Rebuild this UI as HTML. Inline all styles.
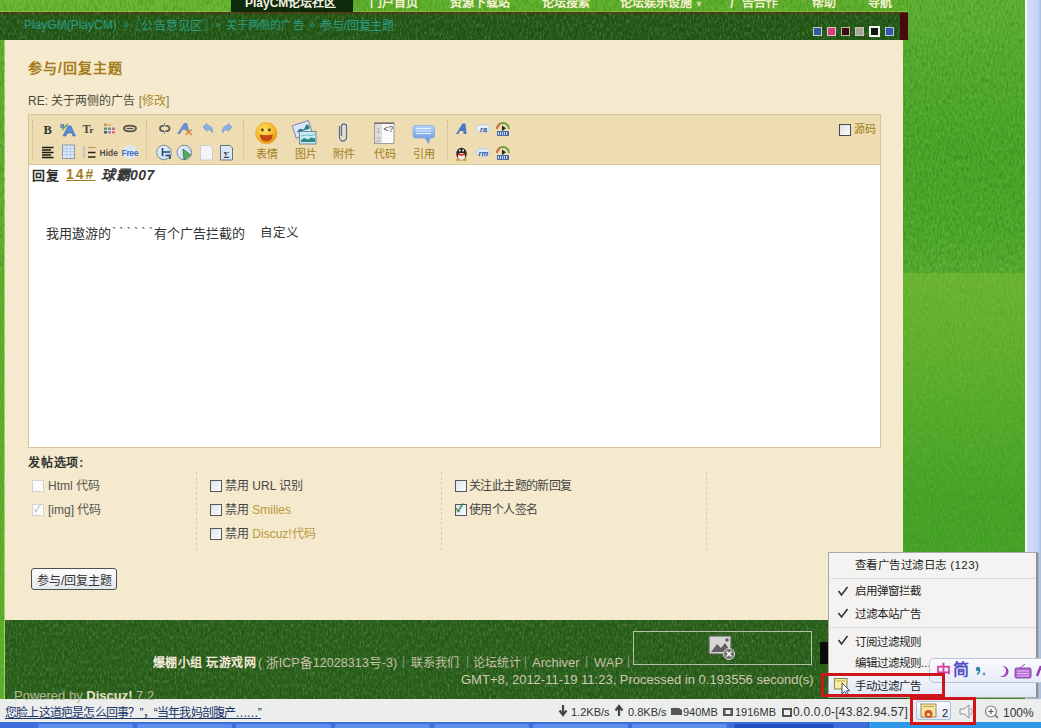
<!DOCTYPE html>
<html lang="zh-CN"><head><meta charset="utf-8">
<style>
*{margin:0;padding:0;box-sizing:border-box}
html,body{width:1041px;height:728px;overflow:hidden;position:relative;background:#4ea424;font-family:"Liberation Sans",sans-serif;font-size:12px;color:#333}
.a{position:absolute}
.cb{width:12px;height:12px;border:1px solid #505860;background:linear-gradient(135deg,#dfe4ea,#fbfcfd)}
.t{position:absolute;white-space:nowrap;line-height:1}
</style></head><body>
<!-- grass background -->
<div class="a" style="left:0;top:0;width:1025px;height:273px;background:linear-gradient(#5cae2e 0px,#52aa2a 60px,#46a424 150px,#4aa626 230px,#52aa2c 273px)"></div>
<div class="a" style="left:0;top:273px;width:1025px;height:427px;background:linear-gradient(#6ab430 0px,#62b02c 70px,#52aa28 150px,#44a224 230px,#42a024 427px)"></div>
<div class="a" style="left:0;top:0;width:231px;height:12px;background:#66b42c;border-bottom:1px solid #8cc050"></div>
<div class="a" style="left:353px;top:0;width:555px;height:12px;background:#5cae28;border-bottom:1px solid #80b848"></div>
<div class="a" style="left:0;top:40px;width:5px;height:660px;background:#5aae2a;border-right:1px solid #a8d070"></div>
<div class="a" style="left:0;top:12px;width:908px;height:28px;background:#245616;border-top:2px solid #4a3a12"></div>
<div class="a" style="left:5px;top:620px;width:903px;height:79px;background:#2a5e1b"></div>
<svg id="noise" class="a" style="left:0;top:0" width="1041" height="728" viewBox="0 0 1041 728">
<defs>
<filter id="gn" x="0" y="0" width="100%" height="100%">
<feTurbulence type="fractalNoise" baseFrequency="0.6 0.25" numOctaves="3" seed="7" result="n"/>
<feColorMatrix type="matrix" values="0 0 0 0 0.85  0 0 0 0 1  0 0 0 0 0.6  0 0 0 -2.2 1.25"/>
</filter>
<filter id="gd" x="0" y="0" width="100%" height="100%">
<feTurbulence type="fractalNoise" baseFrequency="0.45 0.18" numOctaves="3" seed="3"/>
<feColorMatrix type="matrix" values="0 0 0 0 0  0 0 0 0 0.05  0 0 0 0 0  0 0 0 -2.4 1.35"/>
</filter>
</defs>
<rect x="0" y="0" width="1025" height="273" filter="url(#gn)" opacity="0.16"/>
<rect x="0" y="0" width="1025" height="273" filter="url(#gd)" opacity="0.2"/>
<rect x="0" y="273" width="1025" height="427" filter="url(#gn)" opacity="0.1"/>
<rect x="0" y="273" width="1025" height="427" filter="url(#gd)" opacity="0.08"/>
<rect x="0" y="14" width="900" height="26" filter="url(#gn)" opacity="0.05"/>
<rect x="0" y="14" width="900" height="26" filter="url(#gd)" opacity="0.2"/>
<rect x="5" y="620" width="903" height="79" filter="url(#gn)" opacity="0.1"/>
<rect x="5" y="620" width="903" height="79" filter="url(#gd)" opacity="0.22"/>
</svg>
<!-- scrollbar -->
<div class="a" style="left:1025px;top:0;width:16px;height:700px;background:linear-gradient(90deg,#d4dafa 0,#d0d8f8 6px,#c4d6fa 8px,#c4d6fa 11px,#a8bcd8 14px);border-left:2px solid #f2fff0"></div>

<!-- nav -->
<div class="a" style="left:231px;top:0;width:122px;height:12px;background:#0e2a0c"></div>
<div class="t" style="left:245px;top:-3px;font-size:12px;font-weight:bold;color:#f4f0e0">PlayCM论坛社区</div>
<div class="t" style="left:370px;top:-3px;font-size:12px;font-weight:bold;color:#f4f0d0">门户首页</div>
<div class="t" style="left:450px;top:-3px;font-size:12px;font-weight:bold;color:#f4f0d0">资源下载站</div>
<div class="t" style="left:542px;top:-3px;font-size:12px;font-weight:bold;color:#f4f0d0">论坛搜索</div>
<div class="t" style="left:620px;top:-3px;font-size:12px;font-weight:bold;color:#f4f0d0">论坛娱乐设施<span style="font-size:9px;color:#c8d8a0"> ▼</span></div>
<div class="t" style="left:730px;top:-3px;font-size:12px;font-weight:bold;color:#f4f0d0">广告合作</div>
<div class="t" style="left:812px;top:-3px;font-size:12px;font-weight:bold;color:#f4f0d0">帮助</div>
<div class="t" style="left:868px;top:-3px;font-size:12px;font-weight:bold;color:#f4f0d0">导航</div>


<!-- breadcrumb bar -->
<div class="a" style="left:900px;top:13px;width:8px;height:27px;background:#4a0a0c"></div>


<div class="t" style="left:24px;top:19px;font-size:12px;color:#2a9c88">PlayGM(PlayCM)</div>
<div class="t" style="left:123px;top:19px;font-size:11px;color:#2a9c88">»</div>
<div class="t" style="left:129px;top:20px;font-size:12px;color:#2a9c88;letter-spacing:0.3px">〖公告意见区〗</div>
<div class="t" style="left:215px;top:19px;font-size:11px;color:#2a9c88">»</div>
<div class="t" style="left:226px;top:20px;font-size:11px;color:#2a9c88;letter-spacing:0.1px">关于两侧的广告</div>
<div class="t" style="left:309px;top:19px;font-size:11px;color:#2a9c88">»</div>
<div class="t" style="left:320px;top:20px;font-size:12px;color:#2a9c88;letter-spacing:-0.2px">参与/回复主题</div>
<div class="a" style="left:813px;top:27px;width:9px;height:9px;background:#2c5c9c;border:1px solid #c8d0c0"></div>
<div class="a" style="left:827px;top:27px;width:9px;height:9px;background:#d23c80;border:1px solid #d8c8c0"></div>
<div class="a" style="left:841px;top:27px;width:9px;height:9px;background:#3c0a14;border:1px solid #c0b8a8"></div>
<div class="a" style="left:855px;top:27px;width:9px;height:9px;background:#a8a898;border:1px solid #c8c8b8"></div>
<div class="a" style="left:869px;top:26px;width:11px;height:11px;background:#0c1c0c;border:2px solid #f0f8f0"></div>
<div class="a" style="left:885px;top:27px;width:9px;height:9px;background:#3456a8;border:1px solid #b8c8d8"></div>
<!-- cream -->
<div class="a" style="left:5px;top:40px;width:898px;height:580px;background:#f5eacd"></div>

<!-- content -->
<div class="t" style="left:28px;top:61px;font-size:14px;font-weight:bold;color:#a47c1c;letter-spacing:1px">参与/回复主题</div>
<div class="t" style="left:28px;top:95px;font-size:12px;color:#4a4a40">RE: 关于两侧的广告 <span style="color:#8a7a5a">[</span><span style="color:#b08c30">修改</span><span style="color:#8a7a5a">]</span></div>

<!-- editor frame -->
<div class="a" style="left:28px;top:114px;width:853px;height:334px;border:1px solid #d6c49c;background:#fff"></div>
<div class="a" style="left:29px;top:115px;width:851px;height:50px;background:#eedcb2;border-bottom:1px solid #dcc89c"></div>
<!-- toolbar separators -->
<div class="a" style="left:32px;top:120px;width:0;height:40px;border-left:1px dotted #c8b48a"></div>
<div class="a" style="left:146px;top:120px;width:0;height:40px;border-left:1px dotted #c8b48a"></div>
<div class="a" style="left:243px;top:120px;width:0;height:40px;border-left:1px dotted #c8b48a"></div>
<div class="a" style="left:447px;top:120px;width:0;height:40px;border-left:1px dotted #c8b48a"></div>
<svg class="a" style="left:0;top:0" width="1041" height="728" viewBox="0 0 1041 728">
<defs>
<radialGradient id="sm" cx="0.4" cy="0.35" r="0.7"><stop offset="0" stop-color="#ffe060"/><stop offset="0.7" stop-color="#f6b522"/><stop offset="1" stop-color="#e48a10"/></radialGradient>
<linearGradient id="bl" x1="0" y1="0" x2="0" y2="1"><stop offset="0" stop-color="#b8d4fa"/><stop offset="1" stop-color="#5a8ae0"/></linearGradient>
<linearGradient id="lb" x1="0" y1="0" x2="1" y2="1"><stop offset="0" stop-color="#eef4fc"/><stop offset="1" stop-color="#b8d0ec"/></linearGradient>
</defs>
<!-- group1 row1 -->
<text x="43.5" y="133.5" font-family="Liberation Serif" font-weight="bold" font-size="12.5" fill="#353530">B</text>
<text x="60" y="128" font-family="Liberation Sans" font-weight="bold" font-size="8" fill="#3a70b0">a</text>
<path d="M63 136 L68 126 L71 126 L75.5 136 L73 136 L72 133 L67 133 L66 136Z" fill="#5a8ad0" stroke="#3a68b0" stroke-width="0.6"/>
<path d="M62 130 L68 124" stroke="#4aa060" stroke-width="1.2"/>
<text x="82.5" y="133" font-family="Liberation Serif" font-weight="bold" font-size="12" fill="#504a40">T</text>
<text x="89.5" y="133" font-family="Liberation Serif" font-weight="bold" font-size="9" fill="#3a3630">r</text>
<rect x="104" y="123.5" width="3" height="2.5" fill="#d89050"/><rect x="108" y="124" width="3" height="2" fill="#e0b060"/>
<rect x="104" y="127.5" width="3" height="2.5" fill="#50a070"/><rect x="108" y="127.5" width="3" height="2.5" fill="#7090c0"/><rect x="112" y="127.5" width="3" height="2.5" fill="#c070a0"/>
<rect x="104" y="131" width="3" height="2.5" fill="#406080"/><rect x="108" y="131" width="3" height="2.5" fill="#a080c0"/><rect x="112" y="131" width="3" height="2.5" fill="#e07080"/>
<ellipse cx="130" cy="128.5" rx="6" ry="2.8" fill="none" stroke="#55524c" stroke-width="1.8"/>
<path d="M126.5 128.5 H133.5" stroke="#55524c" stroke-width="1.2"/>
<!-- group1 row2 -->
<path d="M42 147.5 H53.5 M42 150 H51 M42 152.5 H53.5 M42 155 H51 M42 157.5 H53.5" stroke="#1e1a14" stroke-width="1.3"/>
<rect x="62.5" y="145" width="12" height="13.5" fill="#d8e8f8" stroke="#909aa4" stroke-width="1"/>
<path d="M63 148.5 H74 M63 151.5 H74 M63 154.5 H74 M66.5 145.5 V158 M70.5 145.5 V158" stroke="#a8c4e4" stroke-width="0.7"/>
<path d="M84 146 V158" stroke="#c8c8c0" stroke-width="2.5"/>
<path d="M88 147.5 H95.5" stroke="#c0a050" stroke-width="1.3"/><path d="M88 152.5 H95.5 M88 157 H95.5" stroke="#2a2418" stroke-width="1.3"/>
<text x="99.5" y="156" font-family="Liberation Sans" font-weight="bold" font-size="8.5" fill="#55504a" textLength="18.5">Hide</text>
<circle cx="130" cy="152" r="7" fill="#dde8f6"/>
<text x="121.5" y="156" font-family="Liberation Sans" font-weight="bold" font-size="8.5" fill="#4a70b8" textLength="17">Free</text>
<!-- group2 row1 -->
<path d="M160 128.5 a3 2.5 0 0 1 4 -2.5 M160 128.5 a3 2.5 0 0 0 4 2.5 M169.5 128.5 a3 2.5 0 0 0 -4 -2.5 M169.5 128.5 a3 2.5 0 0 1 -4 2.5" fill="none" stroke="#5a5a58" stroke-width="1.8"/>
<path d="M164.5 123 V126 M164.5 131 V134" stroke="#8090a8" stroke-width="1"/>
<path d="M177 134 L184 123 L187 123 L190 133 L187.5 133 L186.5 130 L182.5 130 L180 134Z" fill="#6a90d0"/>
<path d="M185.5 129.5 L192 135 M192 129.5 L185.5 135" stroke="#d88a40" stroke-width="1.6"/>
<path d="M203 127 L207 123.5 V125.5 C211 125.5 213 128 212.5 133 C211 130 209.5 129.5 207 129.5 V131.5 Z" fill="#8cb0e8" stroke="#6a90d0" stroke-width="0.6"/>
<path d="M232 127 L228 123.5 V125.5 C224 125.5 222 128 222.5 133 C224 130 225.5 129.5 228 129.5 V131.5 Z" fill="#8cb0e8" stroke="#6a90d0" stroke-width="0.6"/>
<!-- group2 row2 -->
<circle cx="164" cy="152.5" r="7.3" fill="url(#lb)" stroke="#7a8a98" stroke-width="1"/>
<path d="M162.5 148 V156 M162.5 152 H170 M165.5 155.5 H170 V159" stroke="#2a4a70" stroke-width="1.6" fill="none"/>
<circle cx="184.3" cy="152.5" r="7.3" fill="url(#lb)" stroke="#7a8a98" stroke-width="1"/>
<path d="M183 149 L190.5 155 L184 159.5Z" fill="#58b050" stroke="#2a7030" stroke-width="0.8"/>
<path d="M200.5 145.5 H210 L212.5 148 V160 H200.5Z" fill="#f4f4f8" stroke="#c8c8cc" stroke-width="0.9"/>
<path d="M220.5 145.5 H230 L232.5 148 V160 H220.5Z" fill="#dce8f6" stroke="#6a7480" stroke-width="1"/>
<text x="223.5" y="157.5" font-family="Liberation Serif" font-weight="bold" font-size="9" fill="#304060">Σ</text>
<!-- group3 -->
<circle cx="266.3" cy="133.2" r="10.6" fill="url(#sm)" stroke="#e0a030" stroke-width="0.6"/>
<circle cx="262.4" cy="130" r="1.4" fill="#5a4010"/><circle cx="269.4" cy="130" r="1.4" fill="#5a4010"/>
<path d="M259.5 134.5 Q266.3 136 273 134.5 Q272 141.5 266.3 141.5 Q260.5 141.5 259.5 134.5Z" fill="#c24a14"/>
<g transform="rotate(-18 302 130)"><rect x="294" y="123" width="17" height="13" fill="#dde6f8" stroke="#7888a0" stroke-width="0.9"/><path d="M296 131 l4 -3 l4 2 l4 -4 l2 2 v3 h-14z" fill="#2a7a8a"/></g>
<rect x="299.5" y="131.5" width="16.5" height="12.5" fill="#c8ecf4" stroke="#6a7a90" stroke-width="0.9"/>
<path d="M301 140 l3 -2 l4 1.5 l3 -2 l4 1 v3.5 h-14z" fill="#2a8a88"/><path d="M301 136 l5 -1 l5 0.5 l4 -1" stroke="#5aaab8" stroke-width="0.8" fill="none"/>
<path d="M341.5 136 V126.5 a2.5 2.5 0 0 1 5 0 V137.5 a3.5 3.5 0 0 1 -7 0 V126" fill="none" stroke="#e8ecf0" stroke-width="3"/>
<path d="M341.5 136 V126.5 a2.5 2.5 0 0 1 5 0 V137.5 a3.5 3.5 0 0 1 -7 0 V126" fill="none" stroke="#6a6e72" stroke-width="1.4"/>
<rect x="374.5" y="123" width="19.5" height="20.5" fill="#fbfbfb" stroke="#8a8a84" stroke-width="0.8"/>
<rect x="375" y="123.5" width="7" height="19.5" fill="#dcdcd8"/>
<path d="M374.5 123.2 H394" stroke="#4a4a48" stroke-width="1"/>
<text x="376" y="133" font-family="Liberation Sans" font-size="8" fill="#a8a8a0">1</text>
<text x="376" y="142" font-family="Liberation Sans" font-size="8" fill="#a8a8a0">2</text>
<text x="383.5" y="132" font-family="Liberation Sans" font-size="8.5" fill="#404040">&lt;?</text>
<path d="M415 125.5 H432 Q434.5 125.5 434.5 128 V135.5 Q434.5 138 432 138 H430 L428.5 143.5 L425 138 H415.5 Q413 138 413 135.5 V128 Q413 125.5 415.5 125.5Z" fill="url(#bl)" stroke="#7aa0e0" stroke-width="0.6"/>
<path d="M416 128.5 H431 M416 131 H431 M416 133.5 H431" stroke="#f0f6ff" stroke-width="0.9"/>
<!-- group4 -->
<path d="M456 134 L462.5 123.5 L465.5 123.5 L466.5 134 L463.5 134 L463.3 131 L459.8 131 L458.5 134Z" fill="#4a78c8"/>
<ellipse cx="483" cy="128.5" rx="7" ry="4" fill="#e8f0f8" stroke="#b8c8dc" stroke-width="0.8"/>
<text x="480" y="131.5" font-family="Liberation Sans" font-weight="bold" font-style="italic" font-size="7.5" fill="#2a5090">ra</text>
<path d="M497 129 A6 6 0 0 1 509 129" fill="none" stroke="#6aa040" stroke-width="2"/>
<path d="M497 129 A6 6 0 0 1 500 124" fill="none" stroke="#d0703a" stroke-width="2"/>
<path d="M502 125.5 L506 128.3 L502 131Z" fill="#222"/>
<rect x="497" y="131" width="12" height="5" fill="#4a6aa8"/>
<path d="M498.5 132 V135 M500.5 132 V135 M502.5 132 V135 M504.5 132 V135 M506.5 132 V135" stroke="#e8f0ff" stroke-width="0.8"/>
<ellipse cx="461.5" cy="154" rx="5.2" ry="6.3" fill="#2e2420"/>
<ellipse cx="461.5" cy="156.5" rx="3.6" ry="3.4" fill="#f4ece4"/>
<circle cx="459.8" cy="150.5" r="0.9" fill="#fff"/><circle cx="463.2" cy="150.5" r="0.9" fill="#fff"/>
<path d="M457.5 153.2 Q461.5 155 465.5 153.2 L465 154.8 Q461.5 156.5 458 154.8Z" fill="#d82818"/>
<ellipse cx="458" cy="160" rx="2.2" ry="1" fill="#e0a020"/><ellipse cx="465" cy="160" rx="2.2" ry="1" fill="#e0a020"/>
<ellipse cx="483" cy="152.5" rx="7" ry="4.2" fill="#dce8f8" stroke="#b8c8dc" stroke-width="0.8"/>
<text x="478.5" y="155.5" font-family="Liberation Sans" font-weight="bold" font-style="italic" font-size="7.5" fill="#2a5090">rm</text>
<path d="M497 153 A6 6 0 0 1 509 153" fill="none" stroke="#6aa040" stroke-width="2"/>
<path d="M497 153 A6 6 0 0 1 500 148" fill="none" stroke="#d0703a" stroke-width="2"/>
<path d="M502 149.5 L506 152.3 L502 155Z" fill="#222"/>
<rect x="497" y="155" width="12" height="5" fill="#4a6aa8"/>
<path d="M498.5 156 V159 M500.5 156 V159 M502.5 156 V159 M504.5 156 V159 M506.5 156 V159" stroke="#e8f0ff" stroke-width="0.8"/>
</svg>

<div class="t" style="left:256px;top:149px;font-size:11px;color:#a07c20">表情</div>
<div class="t" style="left:295px;top:149px;font-size:11px;color:#a07c20">图片</div>
<div class="t" style="left:333px;top:149px;font-size:11px;color:#a07c20">附件</div>
<div class="t" style="left:374px;top:149px;font-size:11px;color:#a07c20">代码</div>
<div class="t" style="left:413px;top:149px;font-size:11px;color:#a07c20">引用</div>
<div class="a" style="left:839px;top:124px;width:12px;height:12px;border:1px solid #4a4a4a;background:linear-gradient(135deg,#dde3ea,#fafbfc)"></div>
<div class="t" style="left:854px;top:124px;font-size:11px;color:#a07c20">源码</div>

<!-- editor text -->
<div class="t" style="left:32px;top:169px;font-size:13px;font-weight:bold;color:#303030;letter-spacing:1px">回复</div>
<div class="t" style="left:66px;top:167px;font-size:14px;font-weight:bold;color:#a07c22;text-decoration:underline;letter-spacing:2px">14#</div>
<div class="t" style="left:101px;top:168px;font-size:14px;font-weight:bold;font-style:italic;color:#383838;letter-spacing:0.5px">球霸007</div>
<div class="t" style="left:46px;top:227px;font-size:13px;color:#333">我用遨游的</div><div class="t" style="left:112px;top:226px;font-size:13px;color:#444;letter-spacing:3px">``````</div><div class="t" style="left:154px;top:227px;font-size:13px;color:#333">有个广告拦截的</div><div class="t" style="left:260px;top:227px;font-size:12.5px;color:#333">自定义</div>

<!-- options -->
<div class="t" style="left:28px;top:457px;font-size:12px;font-weight:bold;color:#333;letter-spacing:0.8px">发帖选项:</div>
<div class="a" style="left:196px;top:472px;width:0;height:78px;border-left:1px dashed #dccdb0"></div>
<div class="a" style="left:441px;top:472px;width:0;height:78px;border-left:1px dashed #dccdb0"></div>
<div class="a" style="left:706px;top:472px;width:0;height:78px;border-left:1px dashed #dccdb0"></div>

<div class="a" style="left:32px;top:480px;width:12px;height:12px;border:1px solid #d8d4cc;background:#fbfbf9"></div>
<div class="t" style="left:48px;top:480px;font-size:12px;color:#555">Html 代码</div>
<div class="a" style="left:32px;top:504px;width:12px;height:12px;border:1px solid #d8d4cc;background:#fbfbf9"></div>
<div class="t" style="left:34px;top:504px;font-size:10px;color:#a8b0b0">✓</div>
<div class="t" style="left:48px;top:504px;font-size:12px;color:#555">[img] 代码</div>

<div class="a cb" style="left:210px;top:480px"></div>
<div class="t" style="left:225px;top:480px;font-size:12px;color:#444">禁用 URL 识别</div>
<div class="a cb" style="left:210px;top:504px"></div>
<div class="t" style="left:225px;top:504px;font-size:12px;color:#444">禁用 <span style="color:#b8983c">Smilies</span></div>
<div class="a cb" style="left:210px;top:528px"></div>
<div class="t" style="left:225px;top:528px;font-size:12px;color:#444">禁用 <span style="color:#b8983c">Discuz!代码</span></div>

<div class="a cb" style="left:455px;top:480px"></div>
<div class="t" style="left:469px;top:480px;font-size:12px;color:#444;letter-spacing:-0.6px">关注此主题的新回复</div>
<div class="a cb" style="left:455px;top:504px"></div>
<div class="t" style="left:456px;top:503px;font-size:11px;font-weight:bold;color:#2a8a4a">✓</div>
<div class="t" style="left:469px;top:504px;font-size:12px;color:#444;letter-spacing:-0.6px">使用个人签名</div>

<div class="a" style="left:31px;top:568px;width:86px;height:22px;border:1px solid #505050;border-radius:3px;background:linear-gradient(#fdfdfd,#e4e8ee)"></div>
<div class="t" style="left:37px;top:575px;font-size:12px;color:#333">参与/回复主题</div>
<!-- footer -->

<!-- status bar -->
<div class="a" style="left:0;top:699px;width:1041px;height:23px;background:#eceeee"></div>
<div class="a" style="left:0;top:722px;width:1041px;height:6px;background:#3c6fd9"></div>


<!-- footer content -->
<div class="t" style="left:153px;top:657px;font-size:12px;font-weight:bold;color:#f4e8d8;letter-spacing:0.4px">爆棚小组 玩游戏网</div>
<div class="t" style="left:258px;top:657px;font-size:12.6px;color:#c8c0a8">( 浙ICP备12028313号-3)</div>
<div class="t" style="left:402px;top:655px;font-size:12px;color:#8a9a7a">|</div>
<div class="t" style="left:411px;top:657px;font-size:12px;color:#c8c0a8">联系我们</div>
<div class="t" style="left:466px;top:655px;font-size:12px;color:#8a9a7a">|</div>
<div class="t" style="left:473px;top:657px;font-size:12px;color:#c8c0a8">论坛统计</div>
<div class="t" style="left:524px;top:655px;font-size:12px;color:#8a9a7a">|</div>
<div class="t" style="left:532px;top:656px;font-size:13px;color:#c8c0a8">Archiver</div>
<div class="t" style="left:585px;top:655px;font-size:12px;color:#8a9a7a">|</div>
<div class="t" style="left:594px;top:656px;font-size:13px;color:#c8c0a8">WAP</div>
<div class="t" style="left:627px;top:655px;font-size:12px;color:#8a9a7a">|</div>
<div class="t" style="left:461px;top:673px;font-size:13px;color:#d0c8b0">GMT+8, 2012-11-19 11:23, Processed in 0.193556 second(s)</div>
<div class="a" style="left:633px;top:631px;width:179px;height:34px;border:1px solid #b8c0a8"></div>
<div class="a" style="left:820px;top:642px;width:10px;height:22px;background:#0a0a0a"></div>
<svg class="a" style="left:708px;top:634px" width="30" height="28" viewBox="0 0 30 28">
<rect x="1" y="2" width="22" height="18" fill="#d8d8d8" stroke="#606060" stroke-width="1.2"/>
<path d="M3 18 L9 10 L13 14 L17 9 L21 15 V18Z" fill="#606060"/>
<circle cx="19" cy="6" r="1.8" fill="#606060"/>
<circle cx="21" cy="20" r="5.5" fill="#707070" stroke="#e0e0e0" stroke-width="1"/>
<path d="M18.5 17.5 L23.5 22.5 M23.5 17.5 L18.5 22.5" stroke="#fff" stroke-width="1.5"/>
</svg>
<div class="t" style="left:14px;top:689px;font-size:13px;color:#b8b898">Powered by <b style="color:#e8e0c8">Discuz!</b> 7.2</div>

<div class="t" style="left:5px;top:707px;font-size:12px;color:#1a3466;text-decoration:underline;letter-spacing:-0.8px">您脸上这道疤是怎么回事？”，“当年我妈剖腹产……”</div>
<div class="a" style="left:38px;top:724px;width:95px;height:4px;background:#5c90ec;border-radius:2px 2px 0 0"></div>
<div class="a" style="left:137px;top:724px;width:95px;height:4px;background:#5c90ec;border-radius:2px 2px 0 0"></div>
<div class="a" style="left:236px;top:724px;width:95px;height:4px;background:#5c90ec;border-radius:2px 2px 0 0"></div>
<div class="a" style="left:335px;top:724px;width:95px;height:4px;background:#5c90ec;border-radius:2px 2px 0 0"></div>
<div class="a" style="left:434px;top:724px;width:95px;height:4px;background:#5c90ec;border-radius:2px 2px 0 0"></div>
<div class="a" style="left:533px;top:724px;width:95px;height:4px;background:#5c90ec;border-radius:2px 2px 0 0"></div>
<div class="a" style="left:632px;top:724px;width:95px;height:4px;background:#5c90ec;border-radius:2px 2px 0 0"></div>
<div class="a" style="left:734px;top:724px;width:100px;height:4px;background:#2450c0;border-radius:2px 2px 0 0"></div>
<div class="a" style="left:868px;top:722px;width:173px;height:6px;background:#2c9ae8;border-left:1px solid #1a60b0"></div>
<svg class="a" style="left:555px;top:703px" width="250" height="18" viewBox="0 0 250 18">
<path d="M8 2 V10 M4.5 7.5 L8 12 L11.5 7.5" stroke="#444" stroke-width="2.2" fill="none"/>
<path d="M64 13 V5 M60.5 7.5 L64 3 L67.5 7.5" stroke="#444" stroke-width="2.2" fill="none"/>
<path d="M116 12 H127 V7 L124 5 H116Z" fill="#555"/>
<rect x="168" y="5" width="10" height="8" fill="#555"/><rect x="170.5" y="7" width="5" height="4" fill="#eee"/>
<rect x="227" y="5" width="10" height="9" fill="#555"/><rect x="229" y="7" width="6" height="5" fill="#eee"/>
</svg>
<div class="t" style="left:571px;top:707px;font-size:11px;color:#333">1.2KB/s</div>
<div class="t" style="left:628px;top:707px;font-size:11px;color:#333">0.8KB/s</div>
<div class="t" style="left:683px;top:707px;font-size:11px;color:#333">940MB</div>
<div class="t" style="left:735px;top:707px;font-size:11px;color:#333">1916MB</div>
<div class="t" style="left:793px;top:706px;font-size:12px;color:#333;letter-spacing:0.2px">0.0.0.0-[43.82.94.57]</div>

<!-- context menu -->
<div class="a" style="left:828px;top:552px;width:210px;height:146px;background:#f5f3f1;border:1px solid #a8a8a8;border-right:2px solid #909090;box-shadow:1px 1px 1px rgba(0,0,0,0.15)"></div>
<div class="a" style="left:830px;top:578px;width:205px;height:0;border-top:1px dotted #c8c4c0"></div>
<div class="a" style="left:830px;top:627px;width:205px;height:0;border-top:1px dotted #c8c4c0"></div>
<div class="a" style="left:829px;top:673px;width:207px;height:24px;background:linear-gradient(#f4f6fa,#dfe9f6)"></div>
<div class="t" style="left:855px;top:560px;font-size:11.5px;color:#222;letter-spacing:0.45px">查看广告过滤日志 (123)</div>
<div class="t" style="left:855px;top:586px;font-size:11.5px;color:#222">启用弹窗拦截</div>
<div class="t" style="left:855px;top:609px;font-size:11.5px;color:#222">过滤本站广告</div>
<div class="t" style="left:855px;top:637px;font-size:11.5px;color:#222">订阅过滤规则</div>
<div class="t" style="left:855px;top:658px;font-size:11.5px;color:#222">编辑过滤规则...</div>
<div class="t" style="left:855px;top:681px;font-size:11.5px;color:#222">手动过滤广告</div>
<svg class="a" style="left:834px;top:584px" width="16" height="100" viewBox="0 0 16 100">
<path d="M4.5 7 L7.5 11 L13.5 3" stroke="#333" stroke-width="1.6" fill="none"/>
<path d="M4.5 29 L7.5 33 L13.5 25" stroke="#333" stroke-width="1.6" fill="none"/>
<path d="M4.5 56 L7.5 60 L13.5 52" stroke="#333" stroke-width="1.6" fill="none"/>
<rect x="1.5" y="96" width="0" height="0"/>
</svg>
<svg class="a" style="left:833px;top:677px" width="20" height="18" viewBox="0 0 20 18">
<rect x="1.5" y="1.5" width="12.5" height="10.5" fill="#f8eea0" stroke="#8a8a5a" stroke-width="1.1"/>
<path d="M3.5 4 H12" stroke="#c0a050" stroke-width="1"/>
<path d="M9 6 L9 17 L11.5 14.5 L13.5 18 L15.2 17.2 L13.2 13.8 L16.8 13.8Z" fill="#fff" stroke="#3a4a70" stroke-width="1"/>
</svg>
<!-- IME bar -->
<div class="a" style="left:929px;top:658px;width:120px;height:25px;background:linear-gradient(#fbfbff,#e8ecf8);border:1px solid #b8c4dc;border-radius:5px 0 0 5px"></div>
<div class="t" style="left:936px;top:663px;font-size:15px;font-weight:bold;color:#d040a8">中</div>
<div class="t" style="left:953px;top:662px;font-size:16px;font-weight:bold;color:#5050c0">简</div>
<svg class="a" style="left:970px;top:660px" width="71" height="22" viewBox="0 0 71 22">
<circle cx="8" cy="9" r="2.2" fill="#2a8aa0"/><path d="M9.5 9 Q10 13 7 14" stroke="#2a8aa0" stroke-width="1.5" fill="none"/>
<circle cx="14" cy="14" r="1.4" fill="#50a0c0"/>
<path d="M32 6 A5.5 5.5 0 1 1 30 16 A4 4 0 1 0 32 6Z" fill="#a040b0"/>
<rect x="45" y="8" width="16" height="10" rx="1.5" fill="#b868d0" stroke="#7030a0" stroke-width="0.8"/>
<path d="M47 11 H59 M47 13.5 H59 M47 16 H59" stroke="#f0e0ff" stroke-width="0.8"/>
<path d="M50 8 L55 4" stroke="#9040b0" stroke-width="1"/>
<path d="M67 16 L71 6" stroke="#9040b0" stroke-width="2.5"/>
</svg>
<!-- red rectangles -->
<div class="a" style="left:821px;top:673px;width:124px;height:24px;border:3px solid #d0141c"></div>
<div class="a" style="left:910px;top:697px;width:66px;height:28px;border:3px solid #d0141c"></div>
<!-- tray -->
<div class="a" style="left:916px;top:701px;width:35px;height:19px;border:1px solid #a8c0dc;background:linear-gradient(#fafcff,#dfe8f4);border-radius:2px"></div>
<svg class="a" style="left:918px;top:701px" width="120" height="20" viewBox="0 0 120 20">
<rect x="3" y="3" width="15" height="13" fill="#f8e4a8" stroke="#a08850" stroke-width="1"/>
<path d="M5 5.5 H16" stroke="#c89850" stroke-width="1"/>
<circle cx="10.5" cy="13" r="4" fill="#d05a20"/><circle cx="10.5" cy="13.5" r="1.6" fill="#f8e4a8"/>
<text x="24" y="16" font-family="Liberation Sans" font-size="11" fill="#222">2</text>
<path d="M42 8 H46 L51 4 V17 L46 13 H42Z" fill="#f0f0f0" stroke="#909090" stroke-width="1"/>
<path d="M53 7 Q55.5 10.5 53 14" stroke="#a0a0a0" stroke-width="1" fill="none"/>
<circle cx="73" cy="10.5" r="5.5" fill="#f4f4f4" stroke="#808080" stroke-width="1.2"/>
<path d="M70.5 10.5 H75.5 M73 8 V13" stroke="#606060" stroke-width="1.2"/>
<path d="M77 14 L80 17" stroke="#707070" stroke-width="1.5"/>
</svg>
<div class="t" style="left:1003px;top:707px;font-size:12px;color:#333">100%</div>
</body></html>
